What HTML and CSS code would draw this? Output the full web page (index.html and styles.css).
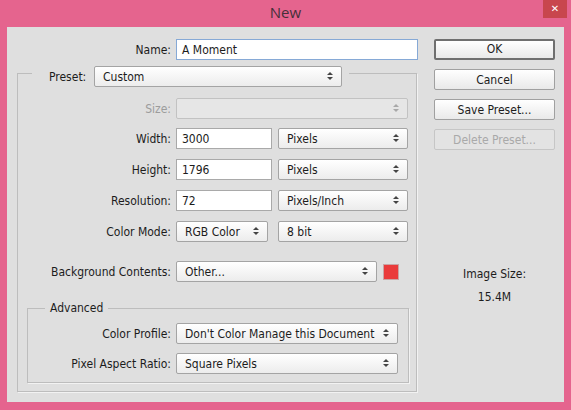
FILE: index.html
```html
<!DOCTYPE html>
<html>
<head>
<meta charset="utf-8">
<link rel="stylesheet" href="styles.css">
</head>
<body>
<div class="window">
  <div class="titlebar">
    <span class="tb-spacer"></span>
    <div class="title">New</div>
    <div class="tb-right"><div class="close">&#x2715;</div></div>
  </div>
  <div class="dialog">
    <div class="main">
      <div class="row name-row">
        <span class="lbl lbl-name">Name:</span>
        <div class="input input-focus w-name">A Moment</div>
      </div>
      <div class="group outer-group">
        <div class="legend preset-legend">
          <span class="preset-lbl">Preset:</span>
          <div class="select w-preset">Custom</div>
        </div>
        <div class="row r-size">
          <span class="lbl lbl-outer lbl-disabled">Size:</span>
          <div class="select select-disabled w-size"></div>
        </div>
        <div class="row r-width">
          <span class="lbl lbl-outer">Width:</span>
          <div class="input w-num">3000</div>
          <div class="select w-unit">Pixels</div>
        </div>
        <div class="row r-std">
          <span class="lbl lbl-outer">Height:</span>
          <div class="input w-num">1796</div>
          <div class="select w-unit">Pixels</div>
        </div>
        <div class="row r-std">
          <span class="lbl lbl-outer">Resolution:</span>
          <div class="input w-num">72</div>
          <div class="select w-unit">Pixels/Inch</div>
        </div>
        <div class="row r-std">
          <span class="lbl lbl-outer">Color Mode:</span>
          <div class="select w-mode">RGB Color</div>
          <div class="select w-bits">8 bit</div>
        </div>
        <div class="row r-bg">
          <span class="lbl lbl-outer">Background Contents:</span>
          <div class="select w-bg">Other...</div>
          <div class="swatch"></div>
        </div>
        <div class="group adv-group">
          <div class="legend adv-legend">Advanced</div>
          <div class="row r-cp">
            <span class="lbl lbl-adv">Color Profile:</span>
            <div class="select w-adv">Don't Color Manage this Document</div>
          </div>
          <div class="row r-par">
            <span class="lbl lbl-adv">Pixel Aspect Ratio:</span>
            <div class="select w-adv">Square Pixels</div>
          </div>
        </div>
      </div>
    </div>
    <div class="side">
      <div class="btn btn-default">OK</div>
      <div class="btn">Cancel</div>
      <div class="btn">Save Preset...</div>
      <div class="btn btn-disabled">Delete Preset...</div>
      <div class="imgsize">
        <div>Image Size:</div>
        <div>15.4M</div>
      </div>
    </div>
  </div>
</div>
</body>
</html>
```

FILE: styles.css
```css
* { box-sizing: border-box; }

html, body {
  margin: 0;
  padding: 0;
}

body {
  width: 571px;
  height: 410px;
  background: #e5648e;
  font-family: "DejaVu Sans Condensed", "DejaVu Sans", sans-serif;
  font-size: 12px;
  color: #1c1c1c;
  overflow: hidden;
}

.window {
  width: 571px;
  height: 410px;
}

.titlebar {
  height: 27px;
  display: grid;
  grid-template-columns: 1fr auto 1fr;
}

.title {
  font-family: "Open Sans", sans-serif;
  font-size: 15px;
  line-height: 25px;
  color: #463039;
}

.tb-right {
  display: flex;
  justify-content: flex-end;
  align-items: flex-start;
}

.close {
  width: 24px;
  height: 18px;
  margin-right: 4px;
  background: #c8464d;
  color: #ffffff;
  font-family: "DejaVu Sans", sans-serif;
  font-size: 10px;
  font-weight: bold;
  line-height: 18px;
  text-align: center;
}

.dialog {
  margin: 0 7px;
  height: 375px;
  background: #dfdfdf;
  display: flex;
  padding: 12px 10px 0 10px;
}

.main {
  width: 400px;
  flex: none;
}

.side {
  width: 121px;
  flex: none;
  margin-left: 17px;
  display: flex;
  flex-direction: column;
}

.row {
  display: flex;
  align-items: center;
  height: 21px;
}

.lbl {
  text-align: right;
  margin-right: 5px;
  white-space: nowrap;
  flex: none;
  padding-top: 1px;
}

.lbl-name { width: 154px; }
.lbl-outer { width: 153px; }
.lbl-adv { width: 143px; }
.lbl-disabled { color: #9c9c9c; }

.input {
  height: 21px;
  background: #ffffff;
  border: 1px solid #a9a9a9;
  padding: 1px 5px 0;
  line-height: 19px;
  white-space: nowrap;
  flex: none;
}

.input-focus {
  border-color: #86a9d6;
}

.select {
  position: relative;
  height: 21px;
  border: 1px solid #a4a4a4;
  border-radius: 2px;
  background: linear-gradient(#ffffff, #ececec);
  padding: 1px 20px 0 8px;
  line-height: 19px;
  white-space: nowrap;
  overflow: hidden;
  flex: none;
}

.select::before,
.select::after {
  content: "";
  position: absolute;
  right: 8px;
  width: 0;
  height: 0;
  border-left: 3px solid transparent;
  border-right: 3px solid transparent;
}

.select::before {
  top: 5px;
  border-bottom: 3px solid #444444;
}

.select::after {
  top: 10px;
  border-top: 3px solid #444444;
}

.select-disabled {
  background: #e6e6e6;
  border-color: #c2c2c2;
}

.select-disabled::before { border-bottom-color: #a8a8a8; }
.select-disabled::after { border-top-color: #a8a8a8; }

.w-name { width: 242px; }
.w-preset { width: 248px; }
.w-size { width: 232px; }
.w-num { width: 96px; }
.w-unit { width: 130px; margin-left: 6px; }
.w-mode { width: 92px; }
.w-bits { width: 130px; margin-left: 10px; }
.w-bg { width: 201px; }
.w-adv { width: 222px; }

.swatch {
  width: 16px;
  height: 16px;
  margin-left: 6px;
  background: #ea3b3b;
  border: 1px solid #c9a5a5;
  flex: none;
}

.group {
  border: 1px solid #bdbdbd;
  box-shadow: 1px 1px 0 #f2f2f2;
}

.outer-group {
  margin-top: 13px;
}

.legend {
  background: #dfdfdf;
  width: fit-content;
}

.preset-legend {
  display: flex;
  align-items: center;
  margin: -8px 0 0 14px;
  padding: 0 7px 0 17px;
  height: 21px;
}

.preset-lbl {
  width: 39px;
  margin-right: 6px;
  white-space: nowrap;
  padding-top: 1px;
}

.r-size { margin-top: 11px; }
.r-width { margin-top: 9px; }
.r-std { margin-top: 10px; }
.r-bg { margin-top: 19px; }

.adv-group {
  margin: 26px 7px 8px 9px;
  padding-bottom: 8px;
}

.adv-legend {
  margin: -8px 0 0 17px;
  padding: 0 5px;
  height: 15px;
  line-height: 15px;
}

.r-cp { margin-top: 7px; }
.r-par { margin-top: 9px; }

.btn {
  height: 21px;
  border: 1px solid #a0a0a0;
  border-radius: 2px;
  background: linear-gradient(#ffffff, #e9e9e9);
  text-align: center;
  padding-top: 1px;
  line-height: 18px;
  margin-bottom: 9px;
}

.btn-default {
  border: 2px solid #6f6f6f;
  padding-top: 0;
  line-height: 17px;
}

.btn-disabled {
  color: #a9a9a9;
  border-color: #c6c6c6;
  background: #e3e3e3;
}

.imgsize {
  margin-top: 104px;
  text-align: center;
  line-height: 23px;
}
```
